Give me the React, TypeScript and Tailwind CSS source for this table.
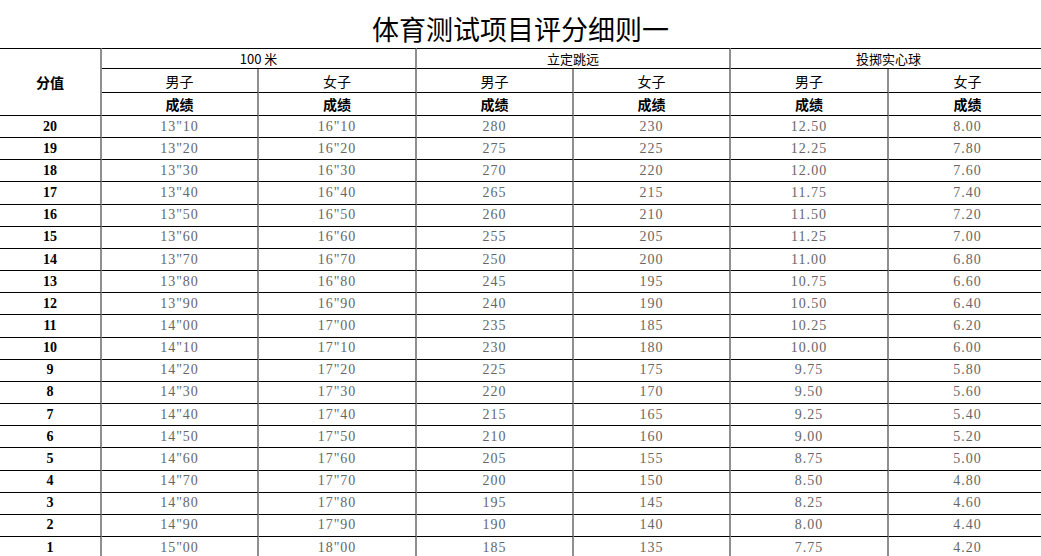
const COLS = [102, 157, 158, 157, 157, 158, 157];

const pad = (n: number) => String(n).padStart(2, "0");
const time = (t: number) => `${Math.floor(t / 100)}"${pad(t % 100)}`;

const rows = Array.from({ length: 20 }, (_, i) => {
  const score = 20 - i;
  return {
    score,
    cells: [
      time(1310 + i * 10),
      time(1610 + i * 10),
      String(280 - i * 5),
      String(230 - i * 5),
      (12.5 - i * 0.25).toFixed(2),
      (8 - i * 0.2).toFixed(2),
    ],
  };
});

const sans = "font-['Noto_Sans_CJK_SC','Noto_Sans',sans-serif]";
const vline = "border-r-2 border-r-[#8f8f8f]";
const hline = "border-b border-b-black";

export default function App() {
  return (
    <div className="w-[1041px] h-[556px] overflow-hidden bg-white">
      <div className={`h-[48px] flex justify-center pt-[14px] text-[27px] leading-[30px] text-black ${sans}`}>
        体育测试项目评分细则一
      </div>
      <table className="table-fixed border-separate border-spacing-0 w-[1046px]">
        <colgroup>
          {COLS.map((w, i) => (
            <col key={i} style={{ width: w }} />
          ))}
        </colgroup>
        <thead className={`${sans} text-black text-[14px]`}>
          <tr className="h-[21px]">
            <th rowSpan={3} className={`border-t border-t-black ${hline} ${vline} font-bold text-[14px] align-middle`}>
              分值
            </th>
            <th colSpan={2} className={`border-t border-t-black ${hline} ${vline} font-normal text-[13px] leading-none`}>
              100 米
            </th>
            <th colSpan={2} className={`border-t border-t-black ${hline} ${vline} font-normal text-[13px] leading-none`}>
              立定跳远
            </th>
            <th colSpan={2} className={`border-t border-t-black ${hline} font-normal text-[13px] leading-none`}>
              投掷实心球
            </th>
          </tr>
          <tr className="h-[24px]">
            {["男子", "女子", "男子", "女子", "男子", "女子"].map((t, i) => (
              <th key={i} className={`${hline} ${i < 5 ? vline : ""} font-normal leading-none`}>
                {t}
              </th>
            ))}
          </tr>
          <tr className="h-[23px]">
            {Array.from({ length: 6 }, (_, i) => (
              <th key={i} className={`${hline} ${i < 5 ? vline : ""} font-bold leading-none`}>
                成绩
              </th>
            ))}
          </tr>
        </thead>
        <tbody className="font-['Liberation_Serif',serif] text-[14px]">
          {rows.map((r) => (
            <tr key={r.score} className="h-[22.16px]">
              <td className={`${hline} ${vline} text-center font-bold text-black leading-none`}>{r.score}</td>
              {r.cells.map((c, i) => (
                <td
                  key={i}
                  className={`${hline} ${i < 5 ? vline : ""} text-center text-[#666666] tracking-[1px] leading-none`}
                >
                  {c}
                </td>
              ))}
            </tr>
          ))}
        </tbody>
      </table>
    </div>
  );
}
